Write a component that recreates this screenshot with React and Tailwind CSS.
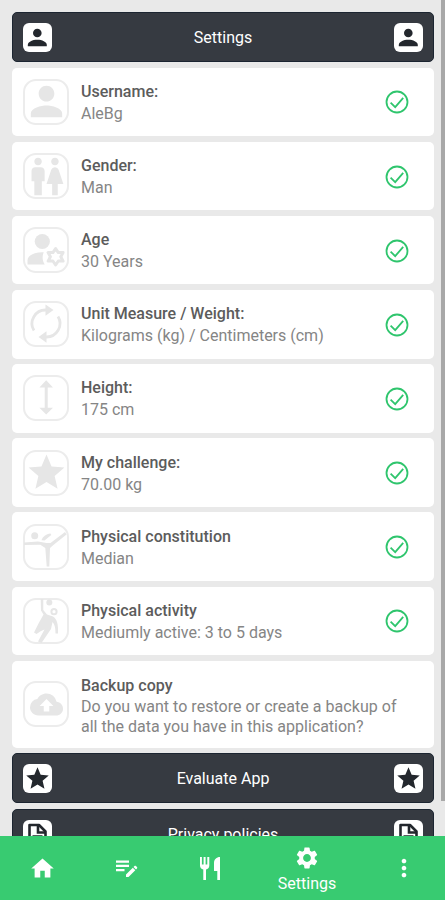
import {
  MdBackup,
  MdHome,
  MdMoreVert,
  MdPerson,
  MdSettings,
  MdStar,
  MdWc,
} from "react-icons/md";

function AgeGlyph() {
  return (
    <svg viewBox="0 0 46 46" className="size-[46px] shrink-0" fill="currentColor">
      <circle cx="19.3" cy="14.5" r="7.6" />
      <path d="M4.5 37.5v-4c0-4.6 6-8.3 15-8.3h1.2c-1.8 4.5-1.3 8.8 1 12.3z" />
      <path
        d="M32.6 21.6l2.7 4 4.8-.1-2.3 4.3 2.3 4.3-4.8-.1-2.7 4-2.7-4-4.8.1 2.3-4.3-2.3-4.3 4.8.1z"
        fill="none"
        stroke="currentColor"
        strokeWidth="3"
        strokeLinejoin="round"
      />
    </svg>
  );
}

function SyncGlyph() {
  return (
    <svg viewBox="0 0 46 46" className="size-[46px] shrink-0" fill="none" stroke="currentColor" strokeWidth="2.8">
      <path d="M11 29.5A13.5 13.5 0 0 1 23 9" />
      <path d="M35 15.500A13.500 13.500 0 0 1 23 36" />
      <path d="M22.500 3.500L30.500 9l-8 5.700z" fill="currentColor" stroke="none" />
      <path d="M23.500 30.300L15.500 36l8 5.700z" fill="currentColor" stroke="none" />
    </svg>
  );
}

function HeightGlyph() {
  return (
    <svg viewBox="0 0 46 46" className="size-[46px] shrink-0" fill="currentColor">
      <path d="M23.2 5.3l6.800 7.200h-5.300v20.200H30l-6.800 6.800-6.800-6.800h5.300V12.500h-5.300z" />
    </svg>
  );
}

function KickGlyph() {
  return (
    <svg viewBox="0 0 46 46" className="size-[46px] shrink-0" fill="currentColor">
      <circle cx="11.700" cy="11.700" r="3.500" />
      <path d="M1 18.400l14-.9 8.500 1.500h4L42 8l1.500 2.400L31 20.500 27 24l-.7 18.500h-2.600L22.300 24l-5-3.200-16.300.2z" />
      <path d="M18.500 16.200c1-3.500 4.500-6 9-6.700l.8 1.500-6.800 5.500z" />
    </svg>
  );
}

function HandballGlyph() {
  return (
    <svg viewBox="0 0 46 46" className="size-[46px] shrink-0" fill="currentColor">
      <circle cx="26.300" cy="4.500" r="3" />
      <circle cx="31" cy="13.700" r="2.600" fill="none" stroke="currentColor" strokeWidth="2" />
      <path d="M17.700 1h2.600v11l3.700 4.500 6 2c4 2.500 5.500 8 5 17h-2.500c0-6-.8-9-3-11.500L28 31l-9.500 14-3.500-1.500 6.500-12-3.500 1.500-4.500 3-2.500-1.500 4.500-9 5-9-2.500-4z" />
    </svg>
  );
}

function CheckMark() {
  return (
    <svg viewBox="0 0 24 24" className="mt-px size-6 shrink-0" fill="none" stroke="#2fc56d" strokeWidth="1.8">
      <circle cx="12" cy="12" r="10.500" />
      <path d="M5.600 12.700l4.600 4.400 8-9.200" />
    </svg>
  );
}

function AccountGlyph() {
  return (
    <svg viewBox="0 0 29 29" className="size-[29px] shrink-0" fill="currentColor">
      <circle cx="14.300" cy="10" r="4.300" />
      <path d="M4.800 23.300v-1.200c0-3.400 4.800-5.300 9.500-5.300s9.500 1.900 9.500 5.300v1.200z" />
    </svg>
  );
}

function DocumentGlyph() {
  return (
    <svg viewBox="0 0 29 29" className="size-[29px] shrink-0" fill="none" stroke="currentColor" strokeWidth="2.6">
      <path d="M6.500 5h9.500l6.500 6.500V26h-16z" strokeLinejoin="round" />
      <path d="M15 5v7.500h7.500M9.500 16.500h10M9.500 21h10" />
    </svg>
  );
}

function NotesGlyph() {
  return (
    <svg viewBox="0 0 24 22" className="h-[22px] w-6" fill="currentColor">
      <path d="M2 3.500h13v2.300H2zM2 7.700h13V10H2zM2 12h8.500v2.300H2z" />
      <path d="M12 17.500l6.800-6.800 2.500 2.500-6.800 6.800H12zM19.500 10l1-1c.4-.4 1-.4 1.400 0l1.100 1.100c.4.4.4 1 0 1.400l-1 1z" />
    </svg>
  );
}

function FoodGlyph() {
  return (
    <svg viewBox="0 0 24 24" className="size-6" fill="currentColor">
      <path d="M2 1h1.900v7.500h1.700V1h2v7.500h1.700V1h2v8.500c0 2.200-1.400 3.700-3.300 4.100V24H5.300V13.600C3.400 13.200 2 11.700 2 9.500z" />
      <path d="M22 1v23h-2.700v-9h-3.300V7c0-3.500 2.500-6 6-6z" />
    </svg>
  );
}

const rows = [
  { title: "Username:", value: "AleBg", icon: <MdPerson size={47} className="shrink-0" /> },
  { title: "Gender:", value: "Man", icon: <MdWc size={45} className="shrink-0" /> },
  { title: "Age", value: "30 Years", icon: <AgeGlyph /> },
  { title: "Unit Measure / Weight:", value: "Kilograms (kg) / Centimeters (cm)", icon: <SyncGlyph /> },
  { title: "Height:", value: "175 cm", icon: <HeightGlyph /> },
  { title: "My challenge:", value: "70.00 kg", icon: <MdStar size={43} className="shrink-0" /> },
  { title: "Physical constitution", value: "Median", icon: <KickGlyph /> },
  { title: "Physical activity", value: "Mediumly active: 3 to 5 days", icon: <HandballGlyph /> },
];

const tabs = [
  { id: "home", icon: <MdHome size={27} /> },
  { id: "notes", icon: <NotesGlyph /> },
  { id: "food", icon: <FoodGlyph /> },
  { id: "settings", icon: <MdSettings size={26} />, label: "Settings" },
  { id: "more", icon: <MdMoreVert size={28} /> },
];

function BarIcon({ children }) {
  return (
    <span className="flex size-[29px] shrink-0 items-center justify-center overflow-hidden rounded-[6px] bg-white text-[#23272d]">
      {children}
    </span>
  );
}

function Bar({ label, icon }) {
  return (
    <div className="flex h-[50px] shrink-0 items-center justify-between rounded-[5px] border border-[#1c2531] bg-[#363a41] px-[10px] text-[16px] text-white">
      <BarIcon>{icon}</BarIcon>
      <span className="pt-px">{label}</span>
      <BarIcon>{icon}</BarIcon>
    </div>
  );
}

function RowIcon({ children }) {
  return (
    <span className="flex size-[46px] shrink-0 items-center justify-center overflow-hidden rounded-[13px] text-[#e6e6e6] ring-2 ring-[#ececec] ring-inset">
      {children}
    </span>
  );
}

function Row({ title, value, icon }) {
  return (
    <div className="flex h-[68.5px] shrink-0 items-center rounded-[5px] bg-white pr-[25px] pl-[11px]">
      <RowIcon>{icon}</RowIcon>
      <div className="ml-3 flex-1 pt-[2px] text-[16px] leading-[22px]">
        <div className="font-medium text-[#5c5c5c]">{title}</div>
        <div className="text-[#858585]">{value}</div>
      </div>
      <CheckMark />
    </div>
  );
}

export default function App() {
  return (
    <div className="flex h-[900px] w-[445px] flex-col overflow-hidden bg-[#e9e9e9] font-['Roboto',sans-serif]">
      <div className="flex h-[836px] shrink-0 overflow-hidden">
        <div className="flex flex-1 flex-col gap-[5.65px] pt-3 pr-[7px] pl-3">
          <Bar label="Settings" icon={<AccountGlyph />} />
          {rows.map((row) => (
            <Row key={row.title} {...row} />
          ))}
          <div className="flex h-[87px] shrink-0 items-center rounded-[5px] bg-white pl-[11px]">
            <RowIcon>
              <MdBackup size={33} className="shrink-0" />
            </RowIcon>
            <div className="ml-3 pt-[3px] text-[16px] leading-[19.500px] text-[#858585]">
              <div className="mb-[2px] font-medium text-[#5c5c5c]">Backup copy</div>
              <div className="tracking-[0.03px]">Do you want to restore or create a backup of</div>
              <div>all the data you have in this application?</div>
            </div>
          </div>
          <Bar label="Evaluate App" icon={<MdStar size={27} className="shrink-0" />} />
          <Bar label="Privacy policies" icon={<DocumentGlyph />} />
        </div>
        <div className="h-[801px] w-1 shrink-0 bg-[#a8a8a8]" />
      </div>
      <nav className="grid h-16 shrink-0 grid-cols-[84px_84px_84px_110px_83px] bg-[#38cb71] text-white">
        {tabs.map((tab) => (
          <button key={tab.id} className="flex flex-col items-center justify-center">
            {tab.label ? (
              <>
                <span className="pt-[6px]">{tab.icon}</span>
                <span className="text-[16px] leading-[26px]">{tab.label}</span>
              </>
            ) : (
              tab.icon
            )}
          </button>
        ))}
      </nav>
    </div>
  );
}
